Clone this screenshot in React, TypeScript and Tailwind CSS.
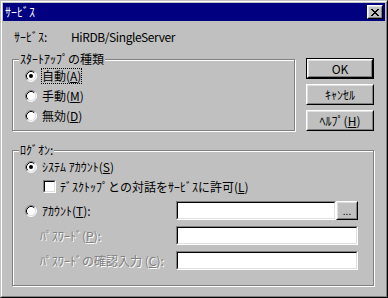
import React from 'react';

// Win95 style service properties dialog

function CloseButton() {
  return (
    <div className="w-[16px] h-[14px] border border-t-white border-l-white border-r-black border-b-black">
      <div className="h-full border border-t-[#dfdfdf] border-l-[#dfdfdf] border-r-[#808080] border-b-[#808080] bg-[#c0c0c0] flex items-center justify-center">
        <svg width="8" height="7" viewBox="0 0 8 7" shapeRendering="crispEdges">
          <path
            fill="#000"
            d="M0 0h2v1H0zM6 0h2v1H6zM1 1h2v1H1zM5 1h2v1H5zM2 2h4v1H2zM3 3h2v1H3zM2 4h4v1H2zM1 5h2v1H1zM5 5h2v1H5zM0 6h2v1H0zM6 6h2v1H6z"
          />
        </svg>
      </div>
    </div>
  );
}

function Radio({ checked }: { checked?: boolean }) {
  return (
    <svg width="12" height="12" viewBox="0 0 12 12" className="shrink-0">
      <circle cx="6" cy="6" r="5" fill="#fff" />
      <path d="M2.11 9.89A5.5 5.5 0 0 1 9.89 2.11" fill="none" stroke="#808080" />
      <path d="M9.89 2.11A5.5 5.5 0 0 1 2.11 9.89" fill="none" stroke="#fff" />
      <path d="M2.82 9.18A4.5 4.5 0 0 1 9.18 2.82" fill="none" stroke="#000" />
      <path d="M9.18 2.82A4.5 4.5 0 0 1 2.82 9.18" fill="none" stroke="#dfdfdf" />
      {checked && <circle cx="6" cy="6" r="2" fill="#000" />}
    </svg>
  );
}

function Sunken({ className, children }: { className?: string; children?: React.ReactNode }) {
  return (
    <div className={`border border-t-[#808080] border-l-[#808080] border-r-white border-b-white ${className ?? ''}`}>
      <div className="h-full border border-t-black border-l-black border-r-[#dfdfdf] border-b-[#dfdfdf] bg-white">
        {children}
      </div>
    </div>
  );
}

function Button({ children, isDefault }: { children: React.ReactNode; isDefault?: boolean }) {
  const face = (
    <div className="h-full border border-t-white border-l-white border-r-black border-b-black">
      <div className="h-full border border-t-[#dfdfdf] border-l-[#dfdfdf] border-r-[#808080] border-b-[#808080] flex items-center justify-center">
        {children}
      </div>
    </div>
  );
  return (
    <div className={`w-[68px] h-[21px] ${isDefault ? 'border border-black' : ''}`}>{face}</div>
  );
}

function GroupBox({
  title,
  className,
  children,
}: {
  title: string;
  className: string;
  children: React.ReactNode;
}) {
  return (
    <div className={`relative border border-[#808080] shadow-[inset_1px_1px_0_#fff,1px_1px_0_#fff] ${className}`}>
      <span className="absolute left-[6px] top-[-8px] bg-[#c0c0c0] px-px leading-[14px]">{title}</span>
      {children}
    </div>
  );
}

const disabled = 'text-[#808080] [text-shadow:1px_1px_0_#fff]';

export default function App() {
  return (
    <div className="w-[388px] h-[298px] font-['Noto_Sans_CJK_JP',sans-serif] text-[12px] leading-[14px] text-black">
      <div className="h-full border border-t-[#c0c0c0] border-l-[#c0c0c0] border-r-black border-b-black">
        <div className="h-full border border-t-white border-l-white border-r-[#808080] border-b-[#808080] bg-[#c0c0c0] p-px flex flex-col">
          {/* Title bar */}
          <div className="h-[18px] shrink-0 bg-[#000080] flex items-center justify-between px-[2px]">
            <span className="text-white">ｻｰﾋﾞｽ</span>
            <CloseButton />
          </div>

          <div className="flex flex-col pl-[9px]">
            {/* Service name */}
            <div className="mt-[9px] h-[14px] flex">
              <span className="ml-[2px] w-[57px]">ｻｰﾋﾞｽ:</span>
              <span className="tracking-[-0.4px]">HiRDB/SingleServer</span>
            </div>

            <div className="mt-[15px] flex items-start">
              {/* Startup type */}
              <GroupBox title="ｽﾀｰﾄｱｯﾌﾟの種類" className="w-[283px] h-[72px]">
                <div className="flex flex-col pt-[6px] pl-[12px]">
                  <div className="h-[20px] flex items-center">
                    <Radio checked />
                    <span className="ml-[4px] border border-dotted border-black">
                      自動(<u>A</u>)
                    </span>
                  </div>
                  <div className="h-[20px] flex items-center">
                    <Radio />
                    <span className="ml-[4px] border border-transparent">
                      手動(<u>M</u>)
                    </span>
                  </div>
                  <div className="h-[20px] flex items-center">
                    <Radio />
                    <span className="ml-[4px] border border-transparent">
                      無効(<u>D</u>)
                    </span>
                  </div>
                </div>
              </GroupBox>

              {/* Buttons */}
              <div className="ml-[11px] -mt-px flex flex-col gap-[5px]">
                <Button isDefault>OK</Button>
                <Button>ｷｬﾝｾﾙ</Button>
                <Button>
                  <span>
                    ﾍﾙﾌﾟ(<u>H</u>)
                  </span>
                </Button>
              </div>
            </div>

            {/* Logon */}
            <GroupBox title="ﾛｸﾞｵﾝ:" className="mt-[19px] w-[362px] h-[136px]">
              <div className="flex flex-col pl-[12px]">
                <div className="mt-[9px] h-[14px] flex items-center">
                  <Radio checked />
                  <span className="ml-[5px]">
                    ｼｽﾃﾑ ｱｶｳﾝﾄ(<u>S</u>)
                  </span>
                </div>
                <div className="mt-[6px] h-[13px] flex items-center pl-[18px]">
                  <Sunken className="w-[13px] h-[13px]" />
                  <span className="ml-[4px]">
                    ﾃﾞｽｸﾄｯﾌﾟとの対話をｻｰﾋﾞｽに許可(<u>L</u>)
                  </span>
                </div>
                <div className="mt-[8px] h-[19px] flex items-center">
                  <div className="w-[151px] flex items-center">
                    <Radio />
                    <span className="ml-[5px]">
                      ｱｶｳﾝﾄ(<u>T</u>):
                    </span>
                  </div>
                  <Sunken className="w-[160px] h-full" />
                  <div className="w-[22px] h-full border border-t-white border-l-white border-r-black border-b-black">
                    <div className="h-full border border-t-[#dfdfdf] border-l-[#dfdfdf] border-r-[#808080] border-b-[#808080] flex items-center justify-center text-[10px]">
                      ...
                    </div>
                  </div>
                </div>
                <div className="mt-[6px] h-[19px] flex items-center">
                  <span className={`w-[151px] pl-[15px] ${disabled}`}>
                    ﾊﾟｽﾜｰﾄﾞ(<u>P</u>):
                  </span>
                  <Sunken className="w-[182px] h-full" />
                </div>
                <div className="mt-[6px] h-[19px] flex items-center">
                  <span className={`w-[151px] pl-[15px] ${disabled}`}>
                    ﾊﾟｽﾜｰﾄﾞの確認入力 (<u>C</u>):
                  </span>
                  <Sunken className="w-[182px] h-full" />
                </div>
              </div>
            </GroupBox>
          </div>
        </div>
      </div>
    </div>
  );
}
